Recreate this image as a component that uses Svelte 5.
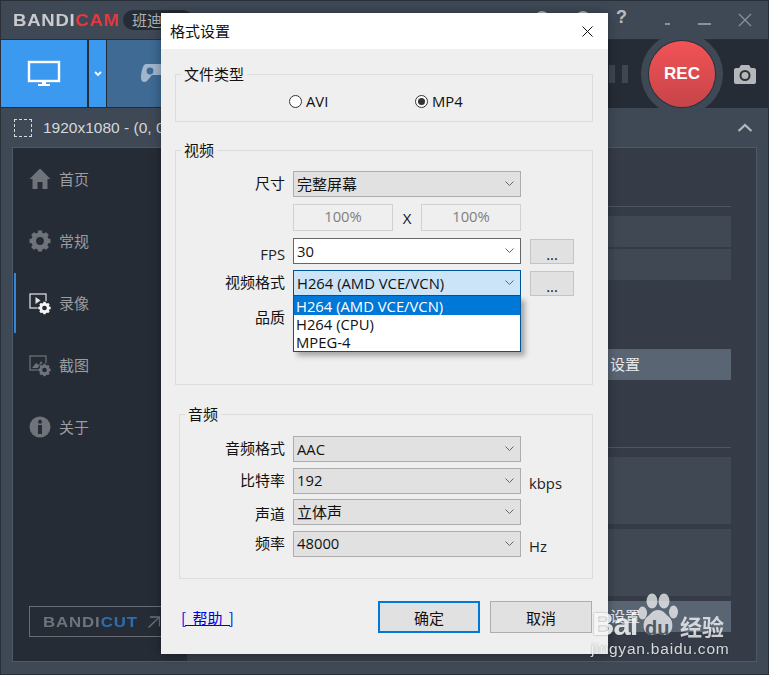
<script>
  let navItems = [
    { label: "首页", icon: "home" },
    { label: "常规", icon: "gear" },
    { label: "录像", icon: "video", active: true },
    { label: "截图", icon: "shot" },
    { label: "关于", icon: "info" }
  ];
  let formats = ["H264 (AMD VCE/VCN)", "H264 (CPU)", "MPEG-4"];
  let audioRows = [
    { label: "音频格式", value: "AAC" },
    { label: "比特率", value: "192", unit: "kbps" },
    { label: "声道", value: "立体声", cjk: true },
    { label: "频率", value: "48000", unit: "Hz" }
  ];
</script>

{#snippet chevron()}
  <svg class="chev" width="9" height="5" viewBox="0 0 9 5"><path d="M.5.500l4 4 4-4" fill="none" stroke="#666" stroke-width="1" /></svg>
{/snippet}

{#snippet gearShape(cx, cy, r, fill, hole)}
  <g transform="translate({cx} {cy})">
    <circle r={r * 0.6} fill="none" stroke={fill} stroke-width={r * 0.46} />
    {#each [0, 45, 90, 135, 180, 225, 270, 315] as a}
      <rect x={-r * 0.2} y={-r} width={r * 0.4} height={r * 0.42} fill={fill} transform="rotate({a})" />
    {/each}
    <circle r={r * 0.3} fill={hole} />
  </g>
{/snippet}

<div class="app">
  <header class="titlebar">
    <div class="logo"><span>BANDI</span><em>CAM</em></div>
    <div class="badge">班迪</div>
    <div class="win-controls">
      <span class="peek one"></span>
      <span class="peek two"></span>
      <span class="help">?</span>
      <span class="dash small"></span>
      <span class="dash"></span>
      <svg width="14" height="14" viewBox="0 0 14 14"><path d="M1 1l12 12M13 1L1 13" stroke="#8b929b" stroke-width="1.2" /></svg>
    </div>
  </header>

  <div class="toolbar">
    <div class="tab-screen">
      <svg width="34" height="28" viewBox="0 0 34 28">
        <rect x="2" y="2" width="30" height="19" fill="none" stroke="#fff" stroke-width="2.4" />
        <path d="M15 22h4v2h4v2H11v-2h4z" fill="#fff" />
      </svg>
    </div>
    <div class="tab-arrow">
      <svg width="8" height="6" viewBox="0 0 8 6"><path d="M1 1l3 3 3-3" fill="none" stroke="#fff" stroke-width="1.8" /></svg>
    </div>
    <div class="tab-game">
      <svg width="30" height="24" viewBox="0 0 30 24">
        <path d="M6 2h20c2 0 3 2 3 5v9c0 3-3 3-5 1l-3-4H12l-5 6c-3 2-6 1-6-3 0-6 2-14 5-14z" fill="#9fb6cd" />
        <circle cx="10" cy="9" r="3.400" fill="#3e6a94" />
      </svg>
    </div>
    <div class="spacer"></div>
    <div class="rec-area">
      <div class="pause"><i></i><i></i></div>
      <div class="rec-ring"><div class="rec">REC</div></div>
      <div class="cam">
        <svg width="24" height="19" viewBox="0 0 24 19">
          <path d="M1 5c0-1 .6-2 2-2h3l2-3h8l2 3h3c1.400 0 2 1 2 2v12c0 1-.6 2-2 2H3c-1.400 0-2-1-2-2z" fill="#b5b7b9" />
          <circle cx="12" cy="10.500" r="4.500" fill="none" stroke="#2b323b" stroke-width="2" />
        </svg>
      </div>
    </div>
  </div>

  <div class="subbar">
    <span class="region"></span>
    <span class="res">1920x1080 - (0, 0)</span>
    <svg class="collapse" width="16" height="9" viewBox="0 0 16 9"><path d="M1.500 8L8 2l6.500 6" fill="none" stroke="#b4b8bd" stroke-width="2.200" /></svg>
  </div>

  <div class="panel">
    <nav class="side">
      {#each navItems as item}
        <div class="nav" class:active={item.active}>
          <svg width="22" height="24" viewBox="0 0 22 24">
            {#if item.icon === "home"}
              <path d="M11 1.500L0.500 12H3.500V22H8.500V15H13.500V22H18.500V12H21.500z" fill="#6f737a" />
            {:else if item.icon === "gear"}
              {@render gearShape(11, 12, 10.500, "#6f737a", "#262c35")}
            {:else if item.icon === "video"}
              <rect x="1" y="3" width="16" height="14" fill="none" stroke="#e4e5e6" stroke-width="1.200" />
              <path d="M6.500 6l5 3.500-5 3.500z" fill="#e4e5e6" />
              <circle cx="15.500" cy="17" r="7" fill="#262c35" />
              {@render gearShape(15.500, 17, 6.200, "#f4f4f4", "#262c35")}
            {:else if item.icon === "shot"}
              <rect x="1" y="3" width="16" height="14" fill="none" stroke="#6f737a" stroke-width="1.200" />
              <path d="M3 15l4-5 3 2 2-4 2 3v4z" fill="#6f737a" />
              <circle cx="15.500" cy="17" r="7" fill="#262c35" />
              {@render gearShape(15.500, 17, 6.200, "#6f737a", "#262c35")}
            {:else}
              <circle cx="11" cy="12" r="10.500" fill="#6f737a" />
              <circle cx="11" cy="6.800" r="2" fill="#262c35" />
              <rect x="9" y="10" width="4" height="9" fill="#262c35" />
            {/if}
          </svg>
          <span>{item.label}</span>
        </div>
      {/each}
      <div class="bandicut">
        <b>BANDI<em>CUT</em></b>
        <svg width="12" height="12" viewBox="0 0 12 12"><path d="M2 1h9.500v9.500M11 1.500L.5 11.500" fill="none" stroke="#6f737a" stroke-width="1.300" /></svg>
      </div>
    </nav>
    <div class="content">
      <div class="rule"></div>
      <div class="block"></div>
      <div class="block gap-s"></div>
      <div class="setbtn gap-l">设置</div>
      <div class="rule gap-m"></div>
      <div class="block tall"></div>
      <div class="block tall gap-t"></div>
      <div class="setbtn gap-t">设置</div>
    </div>
  </div>

  <section class="dialog">
    <div class="dlg-title">
      <span>格式设置</span>
      <svg width="11" height="11" viewBox="0 0 11 11"><path d="M.5.500l10 10M10.500.500l-10 10" stroke="#111" stroke-width="1" /></svg>
    </div>
    <div class="dlg-body">
      <fieldset class="filetype">
        <legend>文件类型</legend>
        <div class="radios">
          <label class="radio"><i></i>AVI</label>
          <label class="radio on"><i></i>MP4</label>
        </div>
      </fieldset>

      <fieldset class="video">
        <legend>视频</legend>
        <div class="grid">
          <span class="lbl">尺寸</span>
          <div class="combo"><span class="cjk">完整屏幕</span>{@render chevron()}</div>
          <span></span>

          <span></span>
          <div class="pct"><span class="pbox">100%</span><span class="x">X</span><span class="pbox">100%</span></div>
          <span></span>

          <span class="lbl low">FPS</span>
          <div class="combo white">30{@render chevron()}</div>
          <button class="more">...</button>

          <span class="lbl">视频格式</span>
          <div class="combo focus">
            {formats[0]}{@render chevron()}
            <ul class="dropdown">
              {#each formats as f, i}
                <li class:sel={i === 0}>{f}</li>
              {/each}
            </ul>
          </div>
          <button class="more">...</button>

          <span class="lbl quality">品质</span>
        </div>
      </fieldset>

      <fieldset class="audio">
        <legend>音频</legend>
        <div class="grid">
          {#each audioRows as r}
            <span class="lbl" class:quality={r.cjk}>{r.label}</span>
            <div class="combo">
              {#if r.cjk}<span class="cjk">{r.value}</span>{:else}{r.value}{/if}
              {@render chevron()}
            </div>
            <span class="unit">{r.unit ?? ""}</span>
          {/each}
        </div>
      </fieldset>

      <div class="actions">
        <a class="help-link" href="#help">[ 帮助 ]</a>
        <button class="btn primary">确定</button>
        <button class="btn">取消</button>
      </div>
    </div>
  </section>

  <div class="watermark">
    <span class="bai">Bai</span>
    <svg class="paw" width="40" height="43" viewBox="0 0 40 43">
      <g fill="#f3f4f5">
        <ellipse cx="14" cy="8" rx="5.500" ry="7.500" />
        <ellipse cx="26" cy="8" rx="5.500" ry="7.500" />
        <ellipse cx="4.500" cy="20" rx="4.500" ry="6.500" />
        <ellipse cx="35.500" cy="19" rx="4.500" ry="6.500" />
        <path d="M20 17c6 0 7 4 11 7 5 4 5 17-4 18-4 0-5-1.500-7-1.500s-3 1.500-7 1.500c-9-1-9-14-4-18 4-3 5-7 11-7z" />
      </g>
    </svg>
    <span class="du">du</span>
    <span class="jy">经验</span>
    <span class="url">jingyan.baidu.com</span>
  </div>
</div>

<style>
  :global(body) {
    margin: 0;
    background: #3f4957;
  }
  .app {
    position: relative;
    width: 769px;
    height: 675px;
    overflow: hidden;
    background: #3f4956;
    border: 1px solid #2a303a;
    box-sizing: border-box;
    font-family: "Noto Sans CJK SC", "Open Sans", sans-serif;
    color: #111;
  }
  .titlebar {
    height: 38px;
    display: flex;
    align-items: center;
    padding-left: 12px;
    border-bottom: 1px solid #2a303a;
  }
  .logo {
    font: bold 17px/1 "Liberation Sans", sans-serif;
    letter-spacing: 0.7px;
    transform: scaleX(1.09);
    transform-origin: left;
    color: #c9cbce;
    width: 110px;
    flex: none;
    white-space: nowrap;
  }
  .logo em {
    font-style: normal;
    color: #e5383f;
  }
  .badge {
    width: 70px;
    height: 20px;
    border-radius: 10px;
    background: #262c35;
    color: #aeb2b7;
    font-size: 15px;
    line-height: 20px;
    padding-left: 9px;
    box-sizing: border-box;
  }
  .win-controls {
    position: relative;
    margin-left: auto;
    display: flex;
    align-items: center;
    padding-right: 16px;
    color: #b9bcc0;
  }
  .peek {
    position: absolute;
    top: -2px;
    width: 14px;
    height: 14px;
    border-radius: 50%;
    background: #b0b3b7;
  }
  .peek.one {
    left: -81px;
  }
  .peek.two {
    left: -40px;
  }
  .help {
    font: bold 18px/1 "Liberation Sans", sans-serif;
    margin-right: 38px;
    margin-top: -6px;
  }
  .dash {
    width: 13px;
    height: 2px;
    background: #8b929b;
    margin-right: 27px;
    margin-top: 8px;
  }
  .dash.small {
    width: 5px;
    margin-right: 28px;
  }
  .toolbar {
    height: 68px;
    display: flex;
    background: #262c35;
    box-sizing: border-box;
  }
  .tab-screen {
    width: 86px;
    height: 67px;
    background: #3b9af0;
    display: flex;
    align-items: center;
    justify-content: center;
  }
  .tab-arrow {
    width: 17px;
    height: 67px;
    margin-left: 2px;
    background: #3b9af0;
    display: flex;
    align-items: center;
    justify-content: center;
  }
  .tab-game {
    width: 70px;
    height: 67px;
    margin-left: 1px;
    background: #3e6a94;
    display: flex;
    align-items: center;
    padding-left: 33px;
    box-sizing: border-box;
  }
  .spacer {
    flex: 1;
  }
  .rec-area {
    display: flex;
    align-items: center;
  }
  .pause {
    display: flex;
    gap: 7px;
    margin-right: 13px;
  }
  .pause i {
    width: 6px;
    height: 18px;
    background: #3f4650;
  }
  .rec-ring {
    width: 82px;
    height: 82px;
    margin: -8px 0;
    border-radius: 50%;
    background: #3f4956;
    display: flex;
    align-items: center;
    justify-content: center;
  }
  .rec {
    width: 66px;
    height: 66px;
    border-radius: 50%;
    background: linear-gradient(#f25356, #c64448);
    color: #fff;
    font: bold 17px/66px "Liberation Sans", sans-serif;
    text-align: center;
    box-shadow: 0 0 0 1px #2a303a;
  }
  .cam {
    width: 45px;
    padding-left: 10px;
    box-sizing: border-box;
    display: flex;
  }
  .subbar {
    height: 39px;
    display: flex;
    align-items: center;
    padding-left: 13px;
    color: #d5d7da;
    font: 15.500px "Liberation Sans", sans-serif;
  }
  .region {
    width: 18px;
    height: 18px;
    border: 1px dashed #d5d7da;
    box-sizing: border-box;
    margin-right: 11px;
  }
  .collapse {
    margin-left: auto;
    margin-right: 15px;
  }
  .panel {
    margin-left: 11px;
    width: 745px;
    height: 515px;
    display: flex;
    border: 1px solid #4f5966;
    box-sizing: border-box;
    background: #353c47;
  }
  .side {
    width: 174px;
    flex: none;
    background: #262c35;
    display: flex;
    flex-direction: column;
  }
  .nav {
    position: relative;
    height: 62px;
    display: flex;
    align-items: center;
    gap: 8px;
    padding-left: 16px;
    color: #9a9da2;
    font-size: 15px;
  }
  .nav span {
    padding-bottom: 2px;
  }
  .nav.active::before {
    content: "";
    position: absolute;
    left: 1px;
    top: 1px;
    width: 2px;
    height: 60px;
    background: #2f86dc;
  }
  .bandicut {
    margin: 148px 0 0 16px;
    height: 31px;
    width: 150px;
    border: 1px solid #6a6e74;
    display: flex;
    align-items: center;
    padding-left: 13px;
    box-sizing: border-box;
    color: #6f737a;
  }
  .bandicut b {
    font: bold 15px "Liberation Sans", sans-serif;
    letter-spacing: 0.8px;
    transform: scaleX(1.12);
    transform-origin: left;
    width: 105px;
    flex: none;
    filter: blur(0.3px);
  }
  .bandicut em {
    font-style: normal;
    color: #2f6db0;
  }
  .content {
    flex: 1;
    display: flex;
    flex-direction: column;
    align-items: flex-end;
    padding: 58px 25px 0 0;
  }
  .rule {
    width: 140px;
    height: 1px;
    background: #4f5762;
    margin-bottom: 9px;
  }
  .block {
    width: 140px;
    height: 31px;
    background: #3f4853;
  }
  .block.tall {
    height: 67px;
  }
  .gap-s {
    margin-top: 2px;
  }
  .gap-l {
    margin-top: 69px;
  }
  .gap-m {
    margin-top: 67px;
  }
  .gap-t {
    margin-top: 5px;
  }
  .setbtn {
    width: 140px;
    height: 31px;
    background: #5a6573;
    color: #e8e9eb;
    font-size: 15px;
    line-height: 29px;
    padding-left: 19px;
    box-sizing: border-box;
  }
  .dialog {
    position: absolute;
    left: 160px;
    top: 12px;
    width: 447px;
    height: 641px;
    background: #efefef;
    display: flex;
    flex-direction: column;
    box-shadow: 0 0 10px rgba(0, 0, 0, 0.35);
  }
  .dlg-title {
    height: 36px;
    background: #fff;
    display: flex;
    align-items: center;
    justify-content: space-between;
    padding: 0 15px 0 9px;
    font-size: 15px;
    flex: none;
  }
  .dlg-title span {
    padding-bottom: 2px;
  }
  .dlg-body {
    padding: 15px 15px 0 14px;
    display: flex;
    flex-direction: column;
    font-size: 15px;
  }
  fieldset {
    margin: 0;
    padding: 0;
    border: 1px solid #dcdcdc;
    box-sizing: border-box;
    min-width: 0;
  }
  legend {
    margin-left: 5px;
    padding: 0 3px;
    font-size: 15px;
    line-height: 20px;
    height: 20px;
  }
  .filetype {
    height: 58px;
  }
  .radios {
    display: flex;
    padding: 7px 0 0 113px;
    font: 14.800px "Open Sans", sans-serif;
  }
  .radio {
    width: 126px;
    display: flex;
    align-items: center;
    gap: 4px;
  }
  .radio i {
    width: 13px;
    height: 13px;
    border: 1px solid #333;
    border-radius: 50%;
    background: #fff;
    box-sizing: border-box;
    position: relative;
  }
  .radio.on i::after {
    content: "";
    position: absolute;
    left: 2px;
    top: 2px;
    width: 7px;
    height: 7px;
    border-radius: 50%;
    background: #333;
  }
  .video {
    height: 245px;
    margin-top: 18px;
  }
  .audio {
    height: 175px;
    margin: 19px 0 0 4px;
  }
  .grid {
    display: grid;
    grid-template-columns: 109px 228px 54px;
    column-gap: 8px;
    row-gap: 6px;
    align-items: center;
    grid-auto-rows: 26px;
  }
  .video .grid {
    padding-top: 11px;
    grid-template-rows: 26px 29px 26px 26px 26px;
  }
  .audio .grid {
    grid-template-columns: 105px 228px 54px;
    padding-top: 12px;
    row-gap: 5.500px;
  }
  .lbl {
    text-align: right;
    font-size: 15px;
    line-height: 20px;
    padding-bottom: 2px;
  }
  .lbl.low {
    font: 14.800px "Open Sans", sans-serif;
    padding: 6px 0 0;
    color: #222;
  }
  .lbl.quality {
    padding: 4px 0 0;
  }
  .unit {
    font: 14.800px "Open Sans", sans-serif;
    color: #222;
    padding-top: 4px;
  }
  .combo {
    position: relative;
    height: 26px;
    box-sizing: border-box;
    border: 1px solid #adadad;
    background: #e1e1e1;
    display: flex;
    align-items: center;
    justify-content: space-between;
    padding: 0 6px 1px 3px;
    font: 14.800px "Open Sans", sans-serif;
    color: #111;
  }
  .combo .cjk {
    font: 15px "Noto Sans CJK SC", sans-serif;
    padding-bottom: 1px;
  }
  .combo.white {
    background: #fff;
    border-color: #666;
  }
  .combo.focus {
    background: #cce4f7;
    border-color: #005499;
  }
  .pct {
    display: flex;
    justify-content: space-between;
    align-items: center;
  }
  .pbox {
    width: 100px;
    height: 27px;
    box-sizing: border-box;
    border: 1px solid #d0d0d0;
    color: #808080;
    text-align: center;
    font: 14.800px/23px "Open Sans", sans-serif;
  }
  .x {
    font: 15px "Open Sans", sans-serif;
  }
  .more {
    width: 44px;
    height: 25px;
    margin-left: 1px;
    border: 1px solid #c4c4c4;
    background: #e1e1e1;
    padding: 4px 0 0;
    font: 14.800px/20px "Open Sans", sans-serif;
    color: #111;
  }
  .dropdown {
    position: absolute;
    left: -1px;
    top: 25px;
    width: 228px;
    margin: 0;
    padding: 0;
    list-style: none;
    background: #fff;
    border: 1px solid #005499;
    border-top: 1px solid #0078d7;
    box-sizing: border-box;
    box-shadow: 4px 4px 5px rgba(0, 0, 0, 0.3);
    z-index: 2;
  }
  .dropdown li {
    height: 18px;
    line-height: 18px;
    padding-left: 2px;
  }
  .dropdown li.sel {
    background: #0078d7;
    color: #fff;
  }
  .actions {
    display: flex;
    align-items: center;
    gap: 10px;
    margin-top: 22px;
    padding: 0 1px 0 6px;
  }
  .help-link {
    color: #0000e0;
    font-size: 15px;
    text-decoration: underline;
    margin-right: auto;
    white-space: pre;
    word-spacing: 3px;
  }
  .btn {
    width: 102px;
    height: 32px;
    border: 1px solid #adadad;
    background: #e1e1e1;
    font: 15px "Noto Sans CJK SC", sans-serif;
    color: #111;
    padding: 0;
  }
  .btn.primary {
    border: 2px solid #0078d7;
  }
  .watermark {
    position: absolute;
    left: 590px;
    top: 591px;
    width: 140px;
    height: 70px;
    color: #f3f4f5;
    pointer-events: none;
  }
  .paw {
    position: absolute;
    left: 47px;
    top: 1px;
    opacity: 0.75;
  }
  .bai {
    position: absolute;
    left: 1px;
    top: 14px;
    font: bold 31px/1.2 "Liberation Sans", sans-serif;
    letter-spacing: -1px;
    color: #f7f7f8;
    opacity: 0.85;
    text-shadow: 0 0 2px rgba(0, 0, 0, 0.45);
  }
  .du {
    position: absolute;
    left: 54px;
    top: 24px;
    font: bold 20px/1.2 "Liberation Sans", sans-serif;
    color: #4e5865;
  }
  .jy {
    position: absolute;
    left: 89px;
    top: 18px;
    font-size: 22px;
    line-height: 30px;
    font-weight: bold;
    opacity: 0.8;
    white-space: nowrap;
  }
  .url {
    position: absolute;
    left: 0;
    top: 48px;
    font: 15.500px/1.2 "Liberation Sans", sans-serif;
    letter-spacing: 0.8px;
    opacity: 0.85;
    white-space: nowrap;
    text-shadow: 0 0 2px rgba(0, 0, 0, 0.5);
  }
</style>
